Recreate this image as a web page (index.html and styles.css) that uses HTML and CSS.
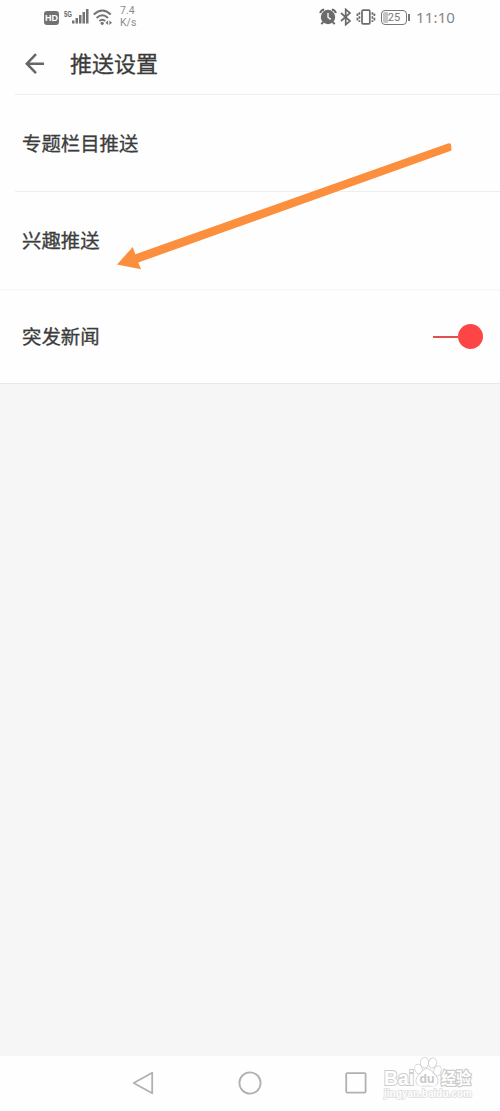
FILE: index.html
```html
<!DOCTYPE html>
<html lang="zh-CN">
<head>
<meta charset="utf-8">
<title>推送设置</title>
<link rel="stylesheet" href="styles.css">
</head>
<body>
<div class="screen">
  <div class="status">
    <div class="status-left">
      <span class="hd">HD</span>
      <svg class="net" width="9" height="14" viewBox="0 0 9 14"><text x="0" y="10" textLength="8" lengthAdjust="spacingAndGlyphs">5G</text></svg>
      <svg class="signal" width="17" height="17" viewBox="0 0 17 17" fill="#747474"><rect x="0" y="12.5" width="2.5" height="3"/><rect x="3.5" y="10" width="2.5" height="5.5"/><rect x="7" y="7" width="2.5" height="8.5"/><rect x="10.5" y="4" width="2.5" height="11.5"/><rect x="14" y="1" width="2.5" height="14.5"/></svg>
      <svg class="wifi" width="20" height="17" viewBox="0 0 20 17" fill="none" stroke="#747474" stroke-width="2"><path d="M.8 5.5Q9.3-2.5 17.8 5.5M3.6 9Q9.3 3.6 15 9M6.3 12Q9.3 9.4 12.2 12"/><circle cx="9.2" cy="14.3" r="1.6" fill="#747474" stroke="none"/><path d="M12.5 13.8l2.6-2.3v4.6zM19 13.8l-2.6-2.3v4.6z" fill="#747474" stroke="none"/></svg>
      <span class="speed">7.4<br>K/s</span>
    </div>
    <div class="status-right">
      <svg width="18" height="18" viewBox="0 0 18 18"><path d="M1.2 5.2Q1.6 2 5.2 1.4M12.8 1.4Q16.4 2 16.8 5.2" fill="none" stroke="#6b6b6b" stroke-width="2"/><circle cx="9" cy="9" r="7.2" fill="#6b6b6b"/><path d="M4.3 14l-2 2.2M13.7 14l2 2.2" stroke="#6b6b6b" stroke-width="2"/><path d="M9 5v4.4l2.8 2" fill="none" stroke="#fff" stroke-width="1.3"/></svg>
      <svg class="bluetooth" width="12" height="18" viewBox="0 0 12 18" fill="none" stroke="#6b6b6b" stroke-width="1.7"><path d="M1 5l9 8-4.3 3.6V1.4L10 5l-9 8"/></svg>
      <svg class="vibrate" width="20" height="18" viewBox="0 0 20 18" fill="none" stroke="#6b6b6b" stroke-width="1.7"><rect x="6" y="2.2" width="7.8" height="13.6" rx="1"/><path d="M3.4 4.2v2.6M3.4 8.2v2.6M3.4 12.2v1.8M1.4 5.5v2.6M1.4 9.8v2.6M16.4 4.2v2.6M16.4 8.2v2.6M16.4 12.2v1.8M18.4 5.5v2.6M18.4 9.8v2.6"/></svg>
      <span class="battery"><span class="level">25</span></span>
      <span class="clock">11:10</span>
    </div>
  </div>
  <header class="header">
    <svg width="20" height="22" viewBox="0 0 20 22" fill="none" stroke="#666" stroke-width="2.5"><path d="M11 1.2L1.8 10.7l9.2 9.5M2 10.7h17"/></svg>
    <h1>推送设置</h1>
  </header>
  <main class="list">
    <div class="row row-line">专题栏目推送</div>
    <div class="row row-line row-second">兴趣推送</div>
    <div class="row row-last">突发新闻
      <span class="switch"><span class="track"></span><span class="knob"></span></span>
    </div>
  </main>
  <nav class="nav">
    <svg width="22" height="24" viewBox="0 0 22 24"><path d="M20.2 1.7v20.6L1.7 12z"/></svg>
    <svg width="24" height="24" viewBox="0 0 24 24"><circle cx="12" cy="12" r="10.6"/></svg>
    <svg width="22" height="22" viewBox="0 0 22 22"><rect x="1.2" y="1.2" width="19.4" height="19.4" rx="1"/></svg>
  </nav>
  <svg class="arrow" width="350" height="140" viewBox="0 0 350 140"><path d="M7 134.5L22.7 117l2.7 7.3L338.6 13.2 341 13.8l.5 6.2-.5.8L28.3 132.5l2.7 6.8z" fill="#fc8f3e"/></svg>
  <svg class="watermark" width="100" height="50" viewBox="0 0 100 50">
    <g class="mark">
      <text class="brand" x="2" y="33" textLength="30" lengthAdjust="spacingAndGlyphs">Bai</text>
      <text class="cn" x="59" y="32" textLength="30" lengthAdjust="spacingAndGlyphs">经验</text>
      <text class="site" x="2" y="45" textLength="88" lengthAdjust="spacingAndGlyphs">jingyan.baidu.com</text>
      <ellipse cx="36.5" cy="17" rx="3.3" ry="4.6" transform="rotate(-18 36.5 17)"/><ellipse cx="42.5" cy="10.8" rx="3.7" ry="5"/><ellipse cx="50.5" cy="11" rx="3.5" ry="4.8" transform="rotate(12 50.5 11)"/><ellipse cx="55.5" cy="18.8" rx="3.2" ry="4.7" transform="rotate(15 55.5 18.8)"/>
      <path d="M45 17c3.5 0 5.3 3.3 7.3 5.5 3 3 4.5 6.3 2.5 9.4-2.2 3.3-6 1.6-9.8 1.6s-7.7 1.7-9.8-1.6c-2-3.1-.5-6.4 2.5-9.4 2-2.2 3.8-5.5 7.3-5.5z"/>
    </g>
    <text class="du" x="37.5" y="31" textLength="15" lengthAdjust="spacingAndGlyphs">du</text>
  </svg>
</div>
</body>
</html>
```
FILE: styles.css
```css
* { box-sizing: border-box; }
body { margin: 0; background: #fff; font-family: "Noto Sans CJK SC", sans-serif; }
.screen { position: relative; display: flex; flex-direction: column; width: 500px; height: 1111px; overflow: hidden; background: #f6f6f6; }
.status { display: flex; justify-content: space-between; height: 34px; padding: 0 45px 0 44px; background: #fefefe; color: #777; }
.status-left, .status-right { display: flex; align-items: center; }
.hd { width: 15px; height: 14px; margin-top: 1px; border-radius: 3px; background: #727272; color: #fff; font: bold 9px/14px "Liberation Sans", sans-serif; text-align: center; }
.net { margin: -7px -1px 0 5px; overflow: visible; fill: #666; font: bold 9.5px "Liberation Sans", sans-serif; }
.signal { margin-top: -1px; }
.wifi { margin-left: 4px; }
.speed { margin-left: 7px; color: #8c8c8c; font: 10.5px/12px Roboto, sans-serif; }
.bluetooth { margin-left: 3px; }
.vibrate { margin-left: 4px; }
.battery { position: relative; width: 26px; height: 15px; margin-left: 5px; padding: 1px; border: 1.5px solid #777; border-radius: 4px; }
.battery::after { content: ""; position: absolute; right: -4px; top: 3px; width: 2px; height: 7px; background: #777; }
.level { display: block; height: 11px; border-radius: 2px; background: linear-gradient(90deg, #c4c4c4 25%, transparent 25%); color: #777; font: 11px/11px Roboto, sans-serif; text-align: center; }
.clock { width: 39px; margin-left: 9px; font: 15px/20px "Noto Sans", sans-serif; letter-spacing: .15px; color: #858585; white-space: nowrap; }
.header { display: flex; align-items: center; height: 60px; padding: 0 0 1px 25px; background: #fefefe; }
.header h1 { margin: -3px 0 0 25px; color: #3b3b3b; font-size: 22px; font-weight: 400; line-height: 32px; -webkit-text-stroke: .3px #3b3b3b; }
.list { background: #fefefe; border-bottom: 1px solid #e8e8e8; }
.row { position: relative; display: flex; align-items: center; height: 97px; padding: 0 17px 0 22px; color: #3c3c3c; font-size: 19.4px; font-weight: 400; -webkit-text-stroke: .3px #3c3c3c; }
.row-line::before { content: ""; position: absolute; left: 15px; right: 0; top: 0; height: 1px; background: #eee; }
.row-second { height: 98px; padding-bottom: 2px; }
.row-last { height: 94px; padding-bottom: 3px; border-top: 2px solid #f9f9f9; justify-content: space-between; }
.switch { display: flex; align-items: center; margin-top: 2px; }
.track { width: 25px; height: 2px; background: #df5050; }
.knob { width: 25px; height: 25px; border-radius: 50%; background: #fd4545; }
.nav { display: flex; align-items: center; justify-content: space-between; height: 55px; margin-top: auto; padding: 0 133px 1px 132px; background: #fefefe; }
.nav svg { fill: none; stroke: #b1b1b1; stroke-width: 1.8; stroke-linejoin: round; }
.arrow { position: absolute; left: 110px; top: 130px; }
.watermark { position: absolute; left: 382px; top: 1052px; }
.mark { fill: #fff; stroke: #ccc; stroke-width: 1.5; paint-order: stroke; }
.brand { font: bold 21px "Liberation Sans", sans-serif; stroke-width: 2; }
.cn { font: bold 16px "Noto Sans CJK SC", sans-serif; stroke-width: 2.4; }
.site { font: bold 10px "Liberation Sans", sans-serif; stroke: #ddd; }
.du { fill: #c6c6c6; font: bold 13px "Liberation Sans", sans-serif; }
```
